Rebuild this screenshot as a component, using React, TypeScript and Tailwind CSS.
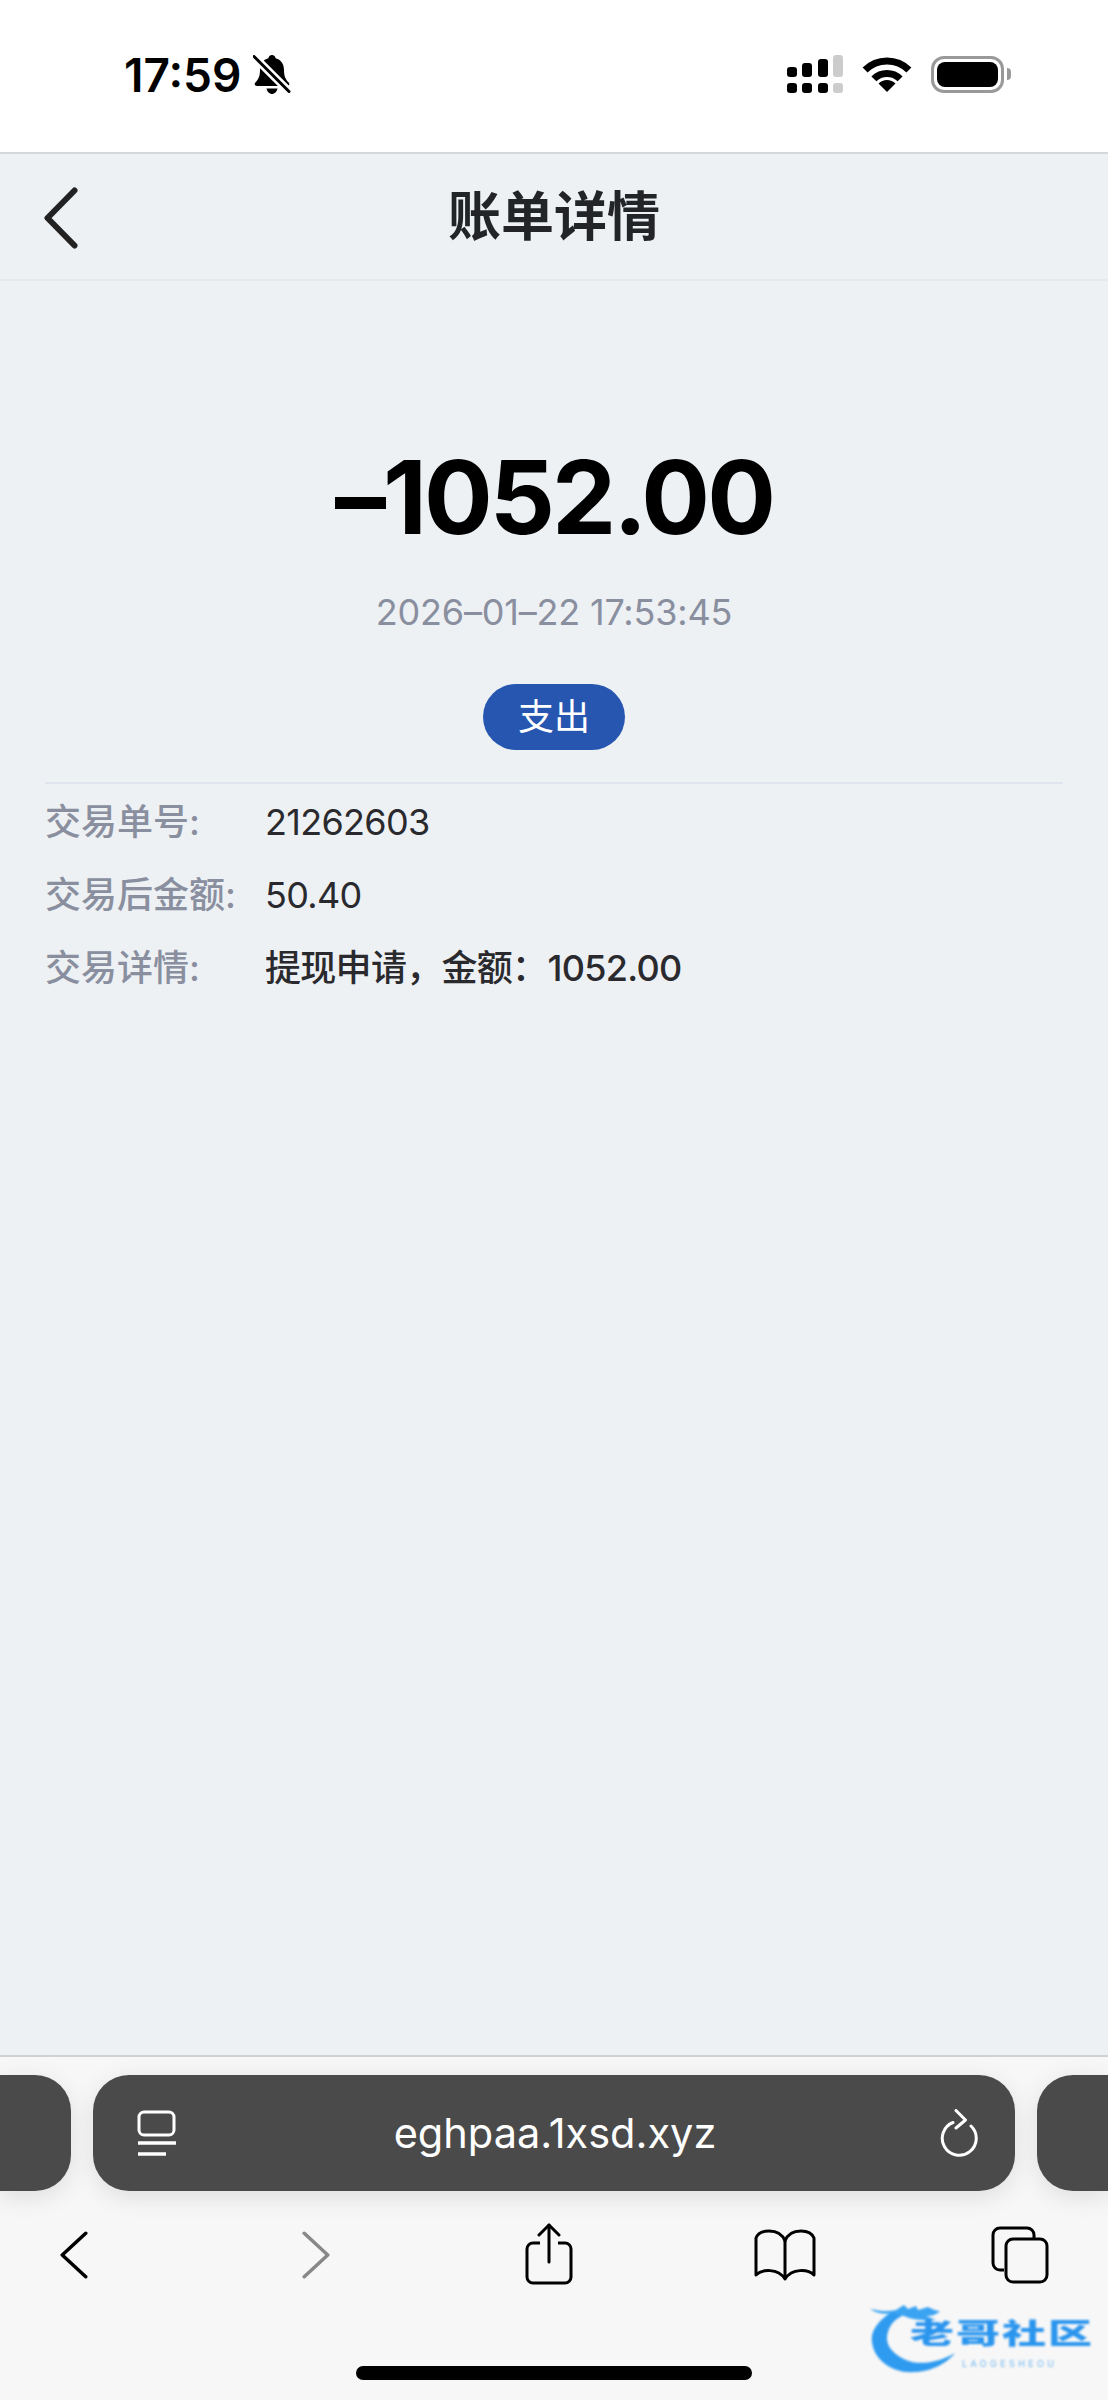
const sans = "font-['Inter','Noto_Sans_CJK_SC',sans-serif]";

function SignalIcon() {
  return (
    <svg width="56" height="38" viewBox="0 0 56 38" className="block">
      <rect x="0" y="12" width="10" height="10" rx="3" fill="#000" />
      <rect x="15" y="8" width="10" height="14" rx="3" fill="#000" />
      <rect x="31" y="4" width="10" height="18" rx="3" fill="#000" />
      <rect x="46" y="0" width="10" height="22" rx="3" fill="#ccc" />
      <rect x="0" y="28" width="10" height="10" rx="3" fill="#000" />
      <rect x="15" y="28" width="10" height="10" rx="3" fill="#000" />
      <rect x="31" y="28" width="10" height="10" rx="3" fill="#000" />
      <rect x="46" y="28" width="10" height="10" rx="3" fill="#ccc" />
    </svg>
  );
}

function WifiIcon() {
  return (
    <svg width="50" height="36" viewBox="0 0 50 36" className="block">
      <path d="M3.1 14.1A31 31 0 0 1 46.9 14.1" fill="none" stroke="#000" strokeWidth="7" />
      <path d="M11.9 22.9A18.5 18.5 0 0 1 38.1 22.9" fill="none" stroke="#000" strokeWidth="7" />
      <path d="M25 36L16.5 27.5A12 12 0 0 1 33.5 27.5Z" fill="#000" />
    </svg>
  );
}

function BatteryIcon() {
  return (
    <div className="flex items-center gap-[3px]">
      <div className="w-[73px] h-[37px] rounded-[13px] border-[3px] border-[#999] p-[3px]">
        <div className="w-full h-full rounded-[8px] bg-black" />
      </div>
      <div className="w-[4px] h-[12px] rounded-r-[4px] bg-[#999]" />
    </div>
  );
}

function MutedBell() {
  return (
    <svg width="38" height="40" viewBox="0 0 38 40" className="block">
      <path
        d="M19 0c2 0 3.4 1.4 3.6 3.2C28 4.6 31 9 31 15c0 6 1.4 9 4.6 12.6 1.4 1.6.6 3.4-1.6 3.4H4c-2.2 0-3-1.8-1.6-3.4C5.6 24 7 21 7 15 7 9 10 4.6 15.4 3.2 15.6 1.4 17 0 19 0z"
        fill="#000"
      />
      <path d="M13.5 33.5h11c-.6 3.2-3 5.5-5.5 5.5s-4.9-2.3-5.5-5.5z" fill="#000" />
      <path d="M1 1.5L36 36.5" stroke="#fff" strokeWidth="8" />
      <path d="M1 1.5L36 36.5" stroke="#000" strokeWidth="3" strokeLinecap="round" />
    </svg>
  );
}

function Chevron({ dir, color, w, h, sw }: { dir: "left" | "right"; color: string; w: number; h: number; sw: number }) {
  const pad = sw / 2 + 0.5;
  const d =
    dir === "left"
      ? `M${w - pad} ${pad}L${pad} ${h / 2}L${w - pad} ${h - pad}`
      : `M${pad} ${pad}L${w - pad} ${h / 2}L${pad} ${h - pad}`;
  return (
    <svg width={w} height={h} viewBox={`0 0 ${w} ${h}`} className="block">
      <path d={d} fill="none" stroke={color} strokeWidth={sw} strokeLinecap="round" strokeLinejoin="round" />
    </svg>
  );
}

function ReaderIcon() {
  return (
    <svg width="40" height="46" viewBox="0 0 40 46" className="block">
      <rect x="2" y="2" width="35" height="23" rx="5" fill="none" stroke="#fff" strokeWidth="3" />
      <path d="M1 33h38" stroke="#fff" strokeWidth="3.5" />
      <path d="M1 44h28" stroke="#fff" strokeWidth="3.5" />
    </svg>
  );
}

function ReloadIcon() {
  return (
    <svg width="38" height="48" viewBox="0 0 38 48" className="block">
      <path d="M13 13.5A17 17 0 1 0 31 17" fill="none" stroke="#fff" strokeWidth="3" strokeLinecap="round" />
      <path d="M16 1.5L25.5 11L16 19" fill="none" stroke="#fff" strokeWidth="3" strokeLinecap="round" strokeLinejoin="round" />
    </svg>
  );
}

function ShareIcon() {
  return (
    <svg width="48" height="62" viewBox="0 0 48 62" className="block">
      <path d="M15 20H8a6 6 0 0 0-6 6v28a6 6 0 0 0 6 6h32a6 6 0 0 0 6-6V26a6 6 0 0 0-6-6h-7" fill="none" stroke="#000" strokeWidth="3" />
      <path d="M24 2v37" stroke="#000" strokeWidth="3" strokeLinecap="round" />
      <path d="M14 12L24 2l10 10" fill="none" stroke="#000" strokeWidth="3" strokeLinecap="round" strokeLinejoin="round" />
    </svg>
  );
}

function BookIcon() {
  return (
    <svg width="62" height="52" viewBox="0 0 62 52" className="block">
      <path d="M31 12C28 4 22 2 15 2 9 2 4 4 2 9v37c6-6 22-7 29 4 7-11 23-10 29-4V9c-2-5-7-7-13-7-7 0-13 2-16 10z" fill="none" stroke="#000" strokeWidth="3" strokeLinejoin="round" />
      <path d="M31 12v36" stroke="#000" strokeWidth="3" />
    </svg>
  );
}

function TabsIcon() {
  return (
    <svg width="58" height="58" viewBox="0 0 58 58" className="block">
      <path d="M13 44H9a7 7 0 0 1-7-7V9a7 7 0 0 1 7-7h27a7 7 0 0 1 7 7v3" fill="none" stroke="#000" strokeWidth="3" />
      <rect x="15" y="13" width="41" height="43" rx="7" fill="none" stroke="#000" strokeWidth="3" />
    </svg>
  );
}

// dragon logo in the corner, sits over the toolbar
function CommunityMark() {
  return (
    <div className="absolute left-[870px] top-[2300px] h-[76px] w-[222px] blur-[0.8px]">
      <svg width="100" height="76" viewBox="0 0 100 76" className="absolute left-0 top-0">
        <path
          d="M22 12C8 20 0 32 2 42c2 20 24 32 42 30 18 0 34-10 41-19-15 9-35 13-49 7C22 54 14 44 18 32c2-8 8-14 18-18z"
          fill="#2f9bf0"
        />
        <path d="M0 9c10 2 18 3 26 1l8-5 4 4 8-3 2 4 10-3c4 2 8 4 12 4-4 4-8 5-14 5l10 4c-10 1-24 0-32-4l-10-3C14 15 6 13 0 9z" fill="#3aa3f2" />
      </svg>
      <div className={`absolute left-[40px] top-[6px] flex w-[182px] origin-center scale-y-[0.64] justify-between text-[44px] leading-[56px] font-black text-[#2b95ee] ${sans}`}>
        <span>老</span>
        <span>哥</span>
        <span>社</span>
        <span>区</span>
      </div>
      <div className={`absolute left-[92px] top-[59px] text-[9px] leading-[9px] tracking-[3.4px] text-[#6db5ef] ${sans}`}>LAOGESHEOU</div>
    </div>
  );
}

function Row({ label, value, strong }: { label: string; value: string; strong?: boolean }) {
  return (
    <div className="flex h-[73px] items-center text-[36px] leading-[48px] tracking-[-0.7px]">
      <div className="w-[220px] font-medium tracking-normal text-[#8a8f9f]">{label}</div>
      <div className={strong ? "font-medium text-[#2a2a2e]" : "text-[#2a2a2e]"}>{value}</div>
    </div>
  );
}

export default function App() {
  return (
    <div className={`relative flex h-[2400px] w-[1108px] flex-col overflow-hidden bg-[#edf1f4] ${sans}`}>
      {/* status bar */}
      <div className="flex h-[152px] items-start justify-between bg-white pl-[124px] pr-[97px] pt-[55px]">
        <div className="flex items-center gap-[12px]">
          <span className="text-[46px] leading-[40px] font-semibold text-black">17:59</span>
          <MutedBell />
        </div>
        <div className="flex items-center gap-[19px]">
          <SignalIcon />
          <WifiIcon />
          <BatteryIcon />
        </div>
      </div>

      {/* page header */}
      <div className="relative flex h-[129px] items-center justify-center border-t-2 border-b-2 border-t-[#d5d8db] border-b-[#e6eaef]">
        <button className="absolute left-[44px] top-[33px]">
          <Chevron dir="left" color="#222" w={34} h={62} sw={6} />
        </button>
        <h1 className="text-[53px] leading-[60px] font-bold text-[#222428]">账单详情</h1>
      </div>

      {/* bill body */}
      <div className="flex flex-1 flex-col px-[45px]">
        <div className="mt-[161px] text-center text-[102px] leading-[110px] font-bold tracking-[-3px] text-black">–1052.00</div>
        <div className="mt-[38px] text-center text-[36px] leading-[44px] tracking-[-0.2px] text-[#8a8f9f]">2026–01–22 17:53:45</div>
        <div className="mt-[50px] flex justify-center">
          <span className="flex h-[66px] w-[142px] items-center justify-center rounded-[33px] bg-[#2756b0] text-[36px] text-white">支出</span>
        </div>
        <div className="mt-[32px] h-[2px] bg-[#dfe4ee]" />
        <div className="mt-[1px]">
          <Row label="交易单号:" value="21262603" />
          <Row label="交易后金额:" value="50.40" />
          <Row label="交易详情:" value={"提现申请\uFF0C金额\uFF1A1052.00"} strong />
        </div>
      </div>

      {/* browser toolbar */}
      <div className="h-[345px] border-t-2 border-[#cfd2d5] bg-[#f7f7f7]">
        <div className="mt-[18px] flex h-[116px] gap-[22px]">
          <div className="w-[71px] shrink-0 rounded-r-[36px] bg-[#4a4a4a] shadow-[0_6px_24px_rgba(0,0,0,0.1)]" />
          <div className="flex w-[922px] shrink-0 items-center rounded-[36px] bg-[#4a4a4a] pl-[44px] pr-[37px] shadow-[0_6px_24px_rgba(0,0,0,0.1)]">
            <ReaderIcon />
            <div className="mr-[7px] flex-1 text-center text-[41.5px] text-white">eghpaa.1xsd.xyz</div>
            <ReloadIcon />
          </div>
          <div className="flex-1 rounded-l-[36px] bg-[#4a4a4a] shadow-[0_6px_24px_rgba(0,0,0,0.1)]" />
        </div>
        <div className="relative mt-[32px] h-[64px]">
          <div className="absolute left-[60px] top-[8px]"><Chevron dir="left" color="#000" w={28} h={48} sw={3.5} /></div>
          <div className="absolute left-[302px] top-[8px]"><Chevron dir="right" color="#888" w={28} h={48} sw={3.5} /></div>
          <div className="absolute left-[525px] top-[0px]"><ShareIcon /></div>
          <div className="absolute left-[754px] top-[6px]"><BookIcon /></div>
          <div className="absolute left-[991px] top-[3px]"><TabsIcon /></div>
        </div>
      </div>

      {/* home indicator */}
      <div className="absolute left-[356px] top-[2366px] h-[14px] w-[396px] rounded-full bg-black" />
      <CommunityMark />
    </div>
  );
}
